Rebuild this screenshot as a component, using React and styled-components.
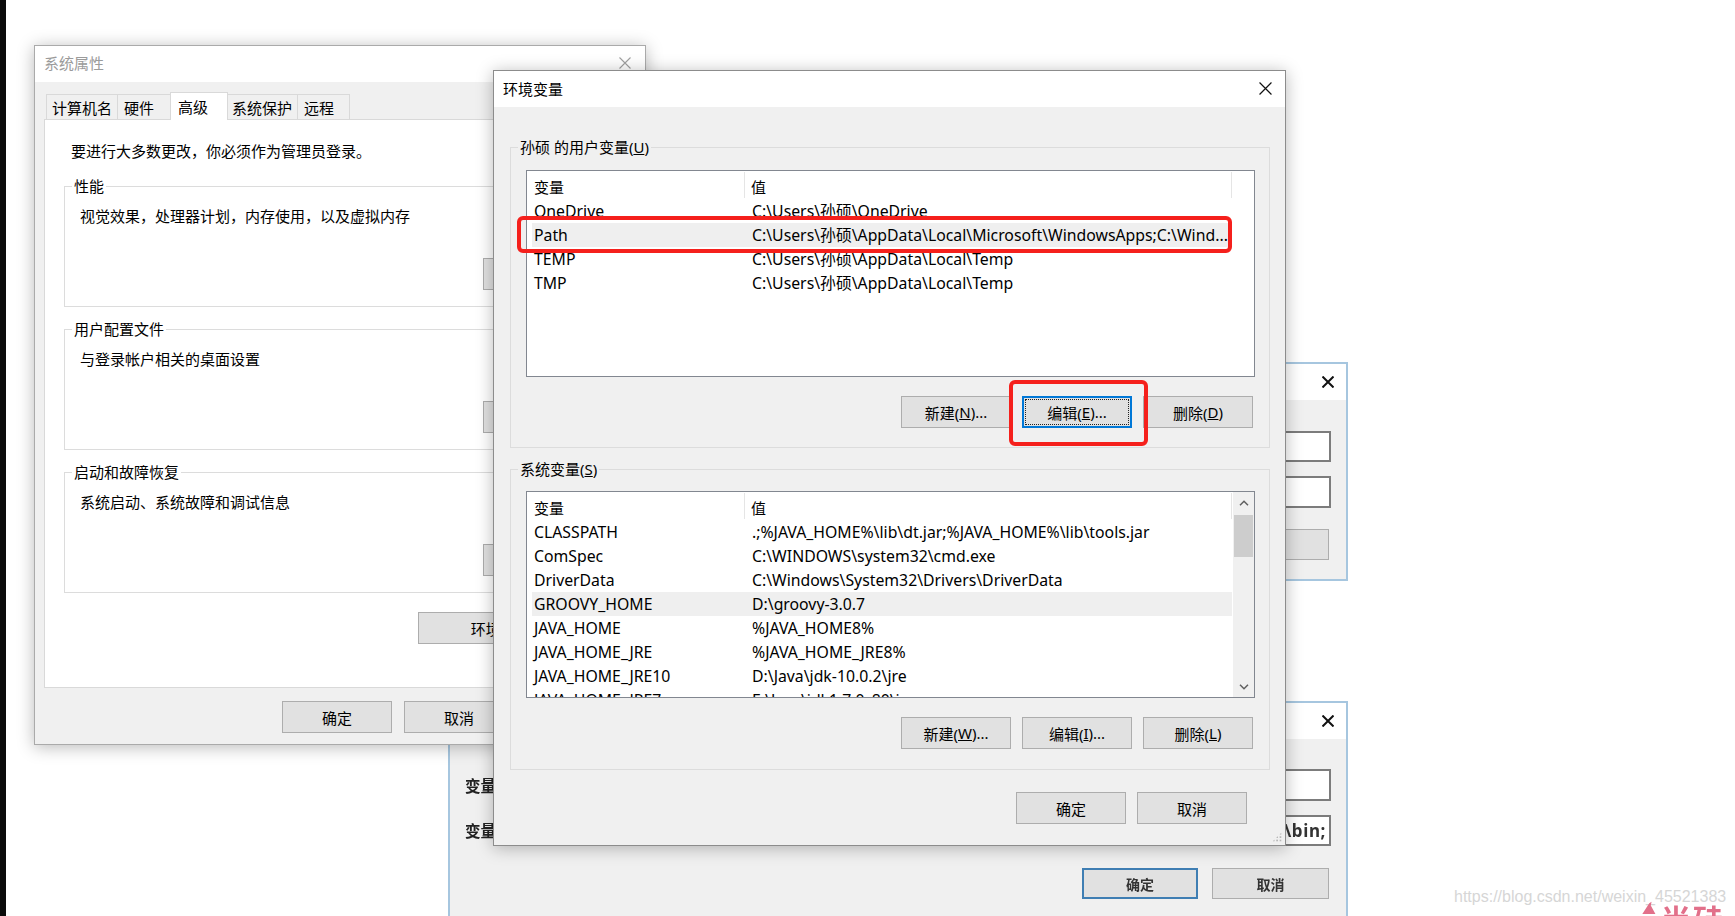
import React from "react";
import styled, { createGlobalStyle, css } from "styled-components";

const GlobalStyle = createGlobalStyle`
  html, body { margin: 0; padding: 0; background: #fff; }
  body {
    font-family: "Noto Sans", "Noto Sans CJK SC", sans-serif;
    font-size: 15px;
    color: #000;
  }
  #root { width: 1735px; height: 916px; }
`;

const Desktop = styled.div`
  position: relative;
  width: 1735px;
  height: 916px;
  overflow: hidden;
  background: #fff;
  box-shadow: inset 6px 0 0 #0b0b0b;
`;

/* ---------- generic window parts ---------- */
const Window = styled.div`
  position: absolute;
  left: ${(p) => p.$x}px;
  top: ${(p) => p.$y}px;
  width: ${(p) => p.$w}px;
  height: ${(p) => p.$h}px;
  box-sizing: border-box;
  border: 1px solid ${(p) => p.$border};
  background: #f0f0f0;
  box-shadow: 0 2px 16px rgba(0, 0, 0, 0.28);
  display: flex;
  flex-direction: column;
`;

const TitleBar = styled.div`
  box-sizing: border-box;
  flex: none;
  height: ${(p) => p.$h}px;
  background: #fff;
  display: flex;
  align-items: center;
  justify-content: space-between;
  padding: 0 ${(p) => p.$pr}px ${(p) => p.$pb || 0}px ${(p) => p.$pl}px;
  color: ${(p) => (p.$inactive ? "#9b9b9b" : "#000")};
`;

const CloseIcon = ({ size, color, weight }) => (
  <svg width={size} height={size} viewBox="0 0 12 12">
    <path d="M0.5 0.5 L11.5 11.5 M11.5 0.5 L0.5 11.5" stroke={color} strokeWidth={weight} fill="none" />
  </svg>
);

const Button = styled.button`
  box-sizing: border-box;
  position: relative;
  flex: none;
  width: ${(p) => p.$w || 110}px;
  height: ${(p) => p.$h || 32}px;
  padding: 0;
  margin: 0;
  background: #e1e1e1;
  border: 1px solid #adadad;
  font-family: inherit;
  font-size: 15px;
  color: #000;
  display: flex;
  align-items: center;
  justify-content: center;
  ${(p) =>
    p.$focused &&
    css`
      border: 2px solid #0078d7;
    `}
`;

const FocusRing = styled.span`
  position: absolute;
  inset: 1px;
  border: 1px dotted #222;
`;

const ButtonRow = styled.div`
  display: flex;
  justify-content: flex-end;
  gap: ${(p) => p.$gap}px;
  margin-top: ${(p) => p.$mt}px;
  padding-right: ${(p) => p.$pr || 0}px;
`;

const Group = styled.fieldset`
  margin: ${(p) => p.$mt || 0}px 0 0 0;
  padding: 0;
  border: 1px solid #dcdcdc;
  min-width: 0;
`;

const Legend = styled.legend`
  margin-left: 7px;
  padding: 0 2px;
  line-height: 20px;
  font-size: 15px;
`;

const GroupBody = styled.div`
  display: flex;
  flex-direction: column;
  padding: ${(p) => p.$pad};
`;

/* ---------- System properties window ---------- */
const SysBody = styled.div`
  flex: 1;
  display: flex;
  flex-direction: column;
  padding: 10px 9px 0 9px;
`;

const TabRow = styled.div`
  display: flex;
  align-items: flex-end;
  height: 27px;
  padding-left: 2px;
`;

const Tab = styled.div`
  box-sizing: border-box;
  position: relative;
  z-index: ${(p) => (p.$active ? 1 : 0)};
  width: ${(p) => p.$w}px;
  height: ${(p) => (p.$active ? 28 : 25)}px;
  margin-bottom: ${(p) => (p.$active ? -1 : 0)}px;
  margin-left: -1px;
  padding-left: ${(p) => p.$pl}px;
  padding-top: ${(p) => (p.$active ? 0 : 1)}px;
  border: 1px solid #d9d9d9;
  border-bottom: none;
  background: ${(p) => (p.$active ? "#fff" : "#f0f0f0")};
  display: flex;
  align-items: center;
  white-space: nowrap;
  &:first-child { margin-left: 0; }
`;

const TabPanel = styled.div`
  box-sizing: border-box;
  height: 569px;
  background: #fff;
  border: 1px solid #d9d9d9;
  padding: 21px 19px 0 19px;
  display: flex;
  flex-direction: column;
`;

const Notice = styled.div`
  margin-left: 7px;
  line-height: 20px;
`;

const GroupText = styled.div`
  margin-top: 10px;
  line-height: 20px;
`;

const RightButton = styled(Button)`
  align-self: flex-end;
  margin-top: ${(p) => p.$mt}px;
`;

const sysGroups = [
  { title: "性能", text: "视觉效果，处理器计划，内存使用，以及虚拟内存" },
  { title: "用户配置文件", text: "与登录帐户相关的桌面设置" },
  { title: "启动和故障恢复", text: "系统启动、系统故障和调试信息" },
];

const tabs = [
  { label: "计算机名", w: 72, pl: 5 },
  { label: "硬件", w: 54, pl: 6 },
  { label: "高级", w: 58, pl: 7, active: true },
  { label: "系统保护", w: 71, pl: 4 },
  { label: "远程", w: 53, pl: 6 },
];

const SystemProperties = () => (
  <Window $x={34} $y={45} $w={612} $h={700} $border="#aaaaaa">
    <TitleBar $h={36} $pl={9} $pr={14} $pb={3} $inactive>
      <span>系统属性</span>
      <CloseIcon size={12} color="#a0a0a0" weight={1.1} />
    </TitleBar>
    <SysBody>
      <TabRow>
        {tabs.map((t) => (
          <Tab key={t.label} $w={t.w} $pl={t.pl} $active={t.active}>
            {t.label}
          </Tab>
        ))}
      </TabRow>
      <TabPanel>
        <Notice>要进行大多数更改，你必须作为管理员登录。</Notice>
        {sysGroups.map((g, i) => (
          <Group key={g.title} $mt={i === 0 ? 15 : 12}>
            <Legend>{g.title}</Legend>
            <GroupBody $pad="0 22px 16px 15px">
              <GroupText>{g.text}</GroupText>
              <RightButton $mt={32}>
                设置(<u>S</u>)...
              </RightButton>
            </GroupBody>
          </Group>
        ))}
        <RightButton $w={198} $mt={19}>
          环境变量(<u>N</u>)...
        </RightButton>
      </TabPanel>
      <ButtonRow $gap={12} $mt={13}>
        <Button>确定</Button>
        <Button>取消</Button>
        <Button>应用(<u>A</u>)</Button>
      </ButtonRow>
    </SysBody>
  </Window>
);

/* ---------- Environment variables dialog ---------- */
const EnvBody = styled.div`
  position: relative;
  flex: 1;
  display: flex;
  flex-direction: column;
  padding: 30px 15px 0 16px;
`;

const ListBox = styled.div`
  box-sizing: border-box;
  height: ${(p) => p.$h}px;
  margin-top: ${(p) => p.$mt}px;
  border: 1px solid #828790;
  background: #fff;
  display: flex;
  overflow: hidden;
`;

const ListInner = styled.div`
  flex: 1;
  min-width: 0;
  padding: 0 ${(p) => p.$pr}px 0 5px;
  overflow: hidden;
`;

const HeaderRow = styled.div`
  display: grid;
  grid-template-columns: 213px 1fr;
  height: 28px;
`;

const HeaderCell = styled.div`
  box-sizing: border-box;
  display: flex;
  align-items: center;
  height: 26px;
  margin-top: 1px;
  padding: 3px 0 0 ${(p) => p.$pl}px;
  border-right: 1px solid #e5e5e5;
`;

const Row = styled.div`
  display: grid;
  grid-template-columns: 213px 1fr;
  height: 24px;
  line-height: 24px;
  font-size: 15.8px;
  background: ${(p) => (p.$hl ? "#efefef" : "transparent")};
`;

const Cell = styled.div`
  padding-left: ${(p) => p.$pl}px;
  white-space: nowrap;
  overflow: hidden;
`;

const ScrollBar = styled.div`
  flex: none;
  width: 21px;
  background: #f0f0f0;
  display: flex;
  flex-direction: column;
  align-items: center;
`;

const ScrollArrow = styled.div`
  flex: none;
  height: 21px;
  width: 100%;
  display: flex;
  align-items: center;
  justify-content: center;
`;

const ScrollThumb = styled.div`
  flex: none;
  margin-top: 2px;
  width: 19px;
  height: 42px;
  background: #cdcdcd;
`;

const ScrollSpacer = styled.div`
  flex: 1;
`;

const Chevron = ({ up }) => (
  <svg width="10" height="6" viewBox="0 0 10 6">
    <path
      d={up ? "M1 5.2 L5 1.2 L9 5.2" : "M1 0.8 L5 4.8 L9 0.8"}
      stroke="#606060"
      strokeWidth="1.5"
      fill="none"
    />
  </svg>
);

const ResizeGrip = styled.div`
  position: absolute;
  right: 3px;
  bottom: 3px;
  width: 10px;
  height: 10px;
  background:
    radial-gradient(circle, #b8b8b8 1px, transparent 1.2px) 0 0 / 3.4px 3.4px;
  clip-path: polygon(100% 0, 100% 100%, 0 100%);
`;

const VarList = ({ rows, height, mt, scroll }) => (
  <ListBox $h={height} $mt={mt}>
    <ListInner $pr={scroll ? 1 : 22}>
      <HeaderRow>
        <HeaderCell $pl={2}>变量</HeaderCell>
        <HeaderCell $pl={6}>值</HeaderCell>
      </HeaderRow>
      {rows.map((r) => (
        <Row key={r[0]} $hl={r[2]}>
          <Cell $pl={2}>{r[0]}</Cell>
          <Cell $pl={7}>{r[1]}</Cell>
        </Row>
      ))}
    </ListInner>
    {scroll && (
      <ScrollBar>
        <ScrollArrow>
          <Chevron up />
        </ScrollArrow>
        <ScrollThumb />
        <ScrollSpacer />
        <ScrollArrow>
          <Chevron />
        </ScrollArrow>
      </ScrollBar>
    )}
  </ListBox>
);

const userRows = [
  ["OneDrive", "C:\\Users\\孙硕\\OneDrive"],
  ["Path", "C:\\Users\\孙硕\\AppData\\Local\\Microsoft\\WindowsApps;C:\\Wind...", true],
  ["TEMP", "C:\\Users\\孙硕\\AppData\\Local\\Temp"],
  ["TMP", "C:\\Users\\孙硕\\AppData\\Local\\Temp"],
];

const sysRows = [
  ["CLASSPATH", ".;%JAVA_HOME%\\lib\\dt.jar;%JAVA_HOME%\\lib\\tools.jar"],
  ["ComSpec", "C:\\WINDOWS\\system32\\cmd.exe"],
  ["DriverData", "C:\\Windows\\System32\\Drivers\\DriverData"],
  ["GROOVY_HOME", "D:\\groovy-3.0.7", true],
  ["JAVA_HOME", "%JAVA_HOME8%"],
  ["JAVA_HOME_JRE", "%JAVA_HOME_JRE8%"],
  ["JAVA_HOME_JRE10", "D:\\Java\\jdk-10.0.2\\jre"],
  ["JAVA_HOME_JRE7", "E:\\Java\\jdk1.7.0_80\\jre"],
];

const EnvDialog = () => (
  <Window $x={493} $y={70} $w={793} $h={776} $border="#8c8c8c">
    <TitleBar $h={36} $pl={9} $pr={13} $pb={1}>
      <span>环境变量</span>
      <CloseIcon size={13} color="#111" weight={1.1} />
    </TitleBar>
    <EnvBody>
      <Group>
        <Legend>孙硕 的用户变量(<u>U</u>)</Legend>
        <GroupBody $pad="0 14px 19px 15px">
          <VarList rows={userRows} height={207} mt={13} />
          <ButtonRow $gap={11} $mt={19} $pr={2}>
            <Button>新建(<u>N</u>)...</Button>
            <Button $focused>
              <FocusRing />
              编辑(<u>E</u>)...
            </Button>
            <Button>删除(<u>D</u>)</Button>
          </ButtonRow>
        </GroupBody>
      </Group>
      <Group $mt={11}>
        <Legend>系统变量(<u>S</u>)</Legend>
        <GroupBody $pad="0 14px 20px 15px">
          <VarList rows={sysRows} height={207} mt={12} scroll />
          <ButtonRow $gap={11} $mt={19} $pr={2}>
            <Button>新建(<u>W</u>)...</Button>
            <Button>编辑(<u>I</u>)...</Button>
            <Button>删除(<u>L</u>)</Button>
          </ButtonRow>
        </GroupBody>
      </Group>
      <ButtonRow $gap={11} $mt={22} $pr={23}>
        <Button>确定</Button>
        <Button>取消</Button>
      </ButtonRow>
      <ResizeGrip />
    </EnvBody>
  </Window>
);

/* ---------- blurred background windows ---------- */
const BgWindow = styled.div`
  position: absolute;
  left: ${(p) => p.$x}px;
  top: ${(p) => p.$y}px;
  width: ${(p) => p.$w}px;
  height: ${(p) => p.$h}px;
  box-sizing: border-box;
  border: 2px solid #a6c6df;
  background: #f0f0f0;
  filter: blur(0.6px);
  display: flex;
  flex-direction: column;
`;

const BgBody = styled.div`
  flex: 1;
  display: flex;
  flex-direction: column;
  align-items: flex-end;
  padding: 0 15px;
`;

const BgField = styled.div`
  box-sizing: border-box;
  width: 700px;
  height: ${(p) => p.$h}px;
  margin-top: ${(p) => p.$mt}px;
  background: #fff;
  border: 2px solid #7c7c7c;
  font-weight: 700;
  font-size: 17px;
  letter-spacing: 0.6px;
  color: #333;
  text-align: ${(p) => p.$align || "right"};
  padding: 0 3px;
  line-height: 27px;
  white-space: nowrap;
  overflow: hidden;
`;

const BgFormRow = styled.div`
  align-self: stretch;
  display: flex;
  align-items: center;
  justify-content: space-between;
  margin-top: ${(p) => p.$mt}px;
`;

const BgLabel = styled.span`
  font-weight: 700;
  font-size: 15.5px;
  color: #222;
`;

const BgButton = styled(Button)`
  width: ${(p) => p.$w}px;
  height: 31px;
  margin-right: ${(p) => p.$mr || 0}px;
  font-weight: 700;
  font-size: 14px;
  color: #333;
  ${(p) =>
    p.$default &&
    css`
      border: 2px solid #3f7eb3;
    `}
`;

const BgWindowTop = () => (
  <BgWindow $x={980} $y={362} $w={368} $h={219}>
    <TitleBar $h={36} $pl={10} $pr={12}>
      <span />
      <CloseIcon size={12} color="#111" weight={2} />
    </TitleBar>
    <BgBody>
      <BgField $h={31} $mt={31} />
      <BgField $h={32} $mt={14} />
      <BgFormRow $mt={21}>
        <span />
        <BgButton $w={260} $mr={2}>
          浏览文件(F)...
        </BgButton>
      </BgFormRow>
    </BgBody>
  </BgWindow>
);

const BgWindowBottom = () => (
  <BgWindow $x={448} $y={701} $w={900} $h={260}>
    <TitleBar $h={36} $pl={10} $pr={12}>
      <span />
      <CloseIcon size={12} color="#111" weight={2} />
    </TitleBar>
    <BgBody>
      <BgFormRow $mt={30}>
        <BgLabel>变量名(N):</BgLabel>
        <BgField $h={32} $mt={0} $align="left">JAVA_HOME</BgField>
      </BgFormRow>
      <BgFormRow $mt={14}>
        <BgLabel>变量值(V):</BgLabel>
        <BgField $h={31} $mt={0}>%JAVA_HOME%\bin;%JAVA_HOME%\jre%\bin;</BgField>
      </BgFormRow>
      <ButtonRow $gap={14} $mt={22} $pr={2}>
        <BgButton $w={116} $default>
          确定
        </BgButton>
        <BgButton $w={117}>取消</BgButton>
      </ButtonRow>
    </BgBody>
  </BgWindow>
);

/* ---------- overlays ---------- */
const Highlight = styled.div`
  position: absolute;
  left: ${(p) => p.$x}px;
  top: ${(p) => p.$y}px;
  width: ${(p) => p.$w}px;
  height: ${(p) => p.$h}px;
  box-sizing: border-box;
  border: 4px solid #f5201c;
  border-radius: 6px;
`;

const Watermark = styled.div`
  position: absolute;
  left: 1454px;
  top: 887px;
  font-family: "Liberation Sans", Arial, sans-serif;
  font-size: 16px;
  line-height: 20px;
  color: #d6d6d6;
  white-space: nowrap;
`;

const LogoClip = styled.div`
  position: absolute;
  left: 1640px;
  top: 899px;
  width: 95px;
  height: 17px;
  overflow: hidden;
  display: flex;
  align-items: flex-start;
  gap: 4px;
  color: #e2708a;
  filter: blur(0.4px);
`;

const LogoText = styled.span`
  font-family: "Noto Sans CJK SC", sans-serif;
  font-weight: 700;
  font-size: 30px;
  line-height: 30px;
  margin-top: 4px;
  letter-spacing: 2px;
`;

const Logo = () => (
  <LogoClip>
    <svg width="22" height="17" viewBox="0 0 22 17">
      <path d="M3 17 L12 3 L15 1 L14 6 L20 17 Z" fill="#e2708a" />
    </svg>
    <LogoText>尚硅谷</LogoText>
  </LogoClip>
);

export default function App() {
  return (
    <>
      <GlobalStyle />
      <Desktop>
        <BgWindowTop />
        <BgWindowBottom />
        <SystemProperties />
        <EnvDialog />
        <Highlight $x={517} $y={216} $w={715} $h={37} />
        <Highlight $x={1009} $y={380} $w={139} $h={66} />
        <Watermark>https://blog.csdn.net/weixin_45521383</Watermark>
        <Logo />
      </Desktop>
    </>
  );
}
